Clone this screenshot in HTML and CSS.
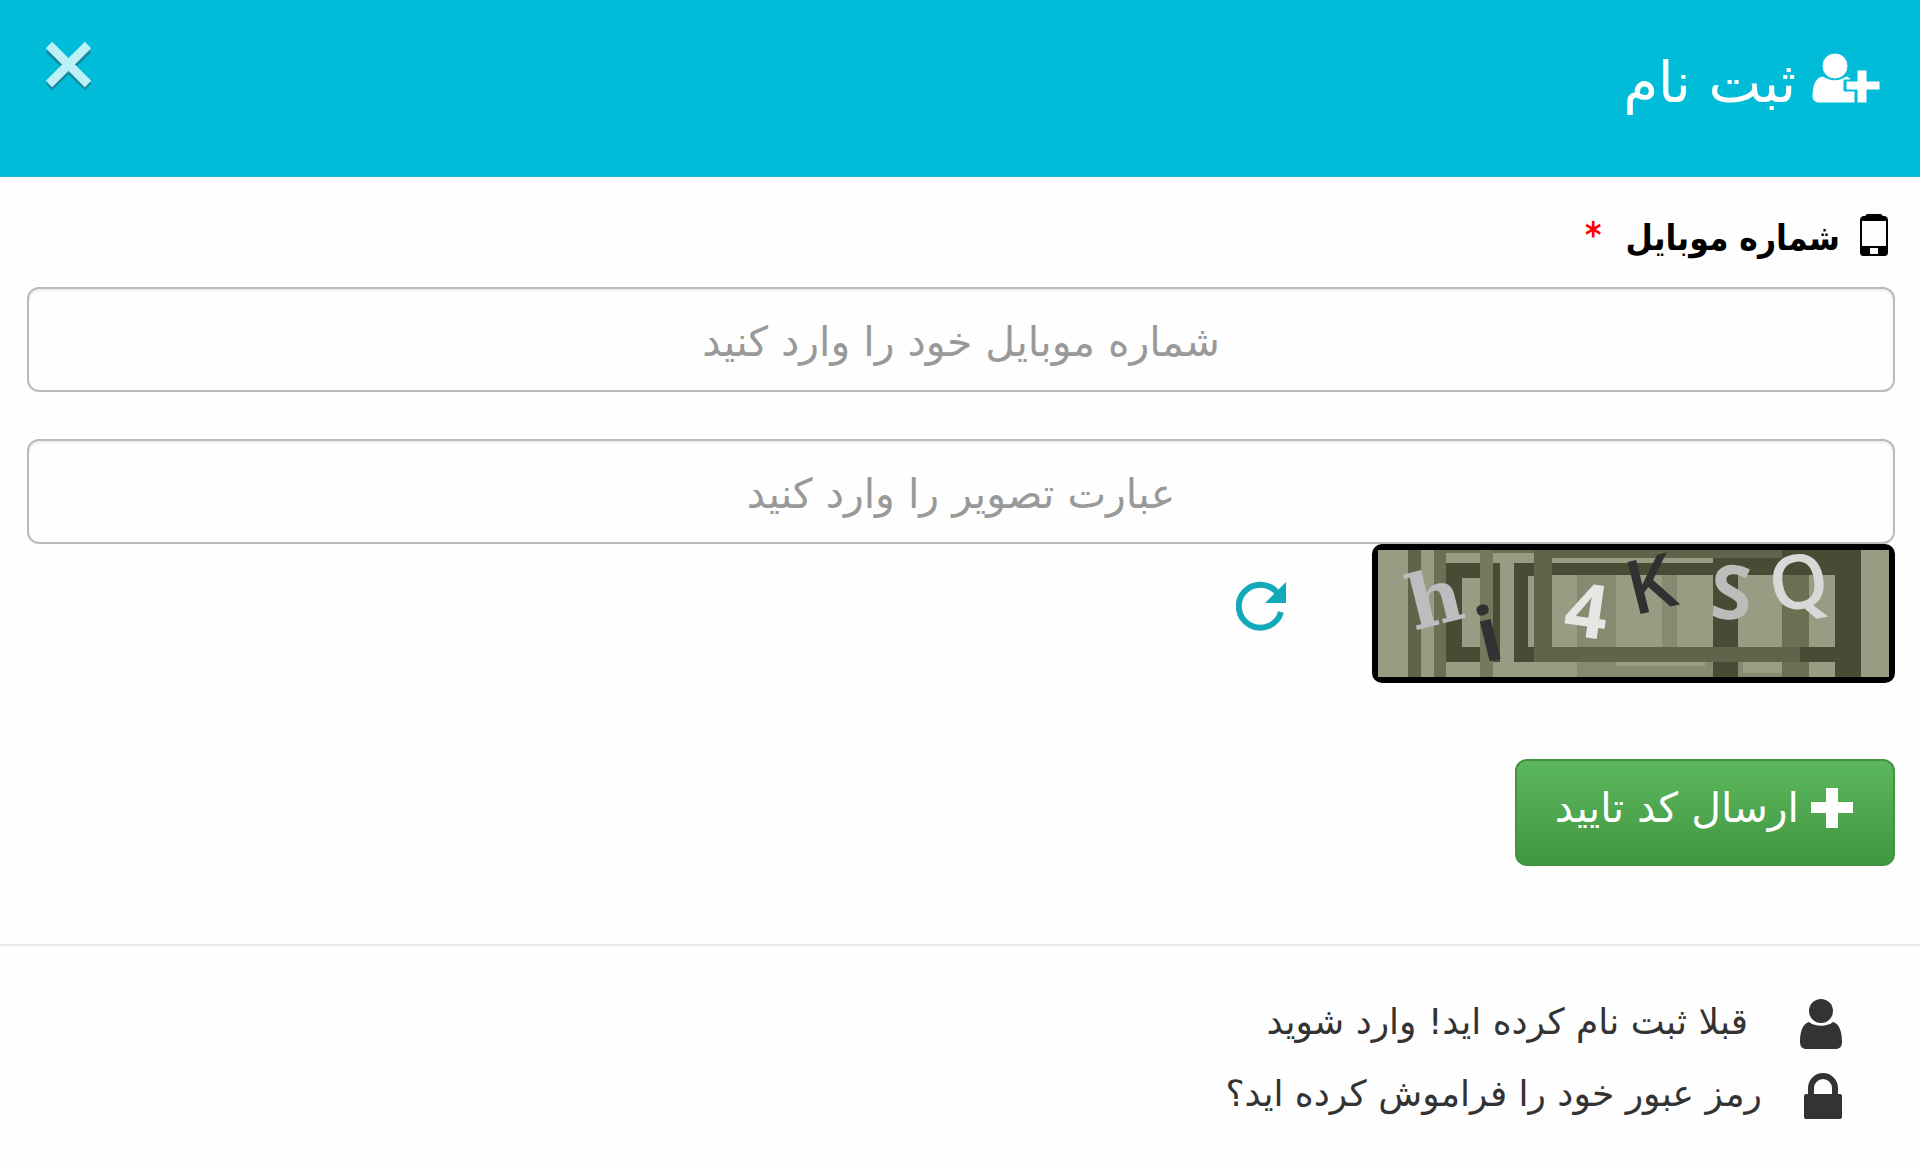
FILE: index.html
```html
<!DOCTYPE html>
<html lang="fa" dir="rtl">
<head>
<meta charset="utf-8">
<meta name="viewport" content="width=device-width, initial-scale=1">
<title>ثبت نام</title>
<link rel="stylesheet" href="styles.css">
</head>
<body>
<header class="modal-header">
  <h1 class="title">
    <svg class="title-icon" viewBox="0 0 68 50" aria-hidden="true">
      <ellipse cx="23" cy="13" rx="13" ry="13"/>
      <path d="M11 23C3 24 0 33 0 43c0 4 3 7 7 7h36V38H32V27h7c-1-2-3-4-5-4-6 5-16 5-23 0z"/>
      <path d="M45 17h10v11h13v9H55v13H45V37H34v-9h11z"/>
    </svg>
    <span>ثبت نام</span>
  </h1>
  <button class="close" type="button" aria-label="بستن">
    <svg class="close-icon" viewBox="0 0 48 50" aria-hidden="true">
      <path class="close-shadow" d="M4 8l39 38M43 8L4 46"/>
      <path class="close-cross" d="M4 4l39 39M43 4L4 43"/>
    </svg>
  </button>
</header>
<main>
  <form class="signup">
    <label class="field-label" for="mobile">
      <svg class="phone-icon" viewBox="0 0 28 42" aria-hidden="true">
        <path fill-rule="evenodd" d="M7 0h14l2 2h2q3 1 3 4v32q0 4-3 4H3q-3 0-3-4V6q0-3 3-4h2zM2 7v25h24V7zM10 34v6h8v-6z"/>
      </svg>
      <span class="label-text">شماره موبایل</span>
      <span class="required">*</span>
    </label>
    <input class="text-input" id="mobile" type="tel" dir="rtl" placeholder="شماره موبایل خود را وارد کنید">
    <input class="text-input" id="captcha" type="text" aria-label="عبارت تصویر" placeholder="عبارت تصویر را وارد کنید">
    <div class="captcha-row">
      <svg class="captcha" viewBox="0 0 511 127" direction="ltr" role="img" aria-label="تصویر امنیتی">
        <rect width="511" height="127" fill="#979c82"/>
        <g fill="#858b70">
          <path d="M199 25h39v72h-39zM284 25h15v72h-15zM199 112h216v15H199z"/>
        </g>
        <path fill="#999e83" d="M238 112h89v4h-89zM365 112h46v11h-46z"/>
        <g fill="#6b7053">
          <path d="M56 0h12v127H56zM404 25h27v102h-27zM56 0h101v3H56z"/>
        </g>
        <g fill="#484c34">
          <path fill-rule="evenodd" d="M68 13h54v99H68zM84 28v69h31V28z"/>
          <path d="M136 13h21v13h-7v71h7v15h-21zM174 13h161v12H174zM335 8h122v17H335zM335 25h25v102h-25zM422 97h35v15h-35zM404 0h79v127h-26V25h-53z"/>
        </g>
        <g fill="#5f654a">
          <path d="M30 0h13v127H30zM156 0h18v112h-18zM156 0h248v8H156zM174 97h248v15H174z"/>
        </g>
        <path fill="#747a5e" d="M102 0h13v127h-13z"/>
        <path fill="#979c82" d="M174 9h161v3H174z"/>
        <g text-anchor="middle">
          <text class="glyph-serif" transform="translate(63 74) rotate(-14)" fill="#bcbdbe">h</text>
          <text class="glyph-sans" transform="translate(117 110) rotate(-14)" fill="#303231">i</text>
          <text class="glyph-sans" transform="translate(205 87) rotate(8)" fill="#e6e7e4">4</text>
          <text class="glyph-round" transform="translate(279 60) rotate(-14)" fill="#303231">K</text>
          <text class="glyph-sans" transform="translate(352 69) rotate(3)" fill="#bcbdba">S</text>
          <text class="glyph-round" transform="translate(425 58) rotate(-10)" fill="#d8d9d7">Q</text>
        </g>
      </svg>
      <button class="refresh" type="button" aria-label="تصویر جدید">
        <svg class="refresh-icon" viewBox="0 0 50 50" aria-hidden="true">
          <path d="M45 31A21.500 21.500 0 1 1 42 13" fill="none" stroke="#12a9b8" stroke-width="6"/>
          <path d="M50 1v21H29z" fill="#12a9b8"/>
        </svg>
      </button>
    </div>
    <button class="submit" type="submit">
      <svg class="plus-icon" viewBox="0 0 42 40" aria-hidden="true"><path d="M15 0h12v14h15v11H27v15H15V25H0V14h15z"/></svg>
      <span>ارسال کد تایید</span>
    </button>
  </form>
</main>
<footer class="links">
  <a class="link link-login" href="#login">
    <svg class="user-icon" viewBox="0 0 42 50" aria-hidden="true"><ellipse cx="21" cy="12" rx="12" ry="12"/><path d="M9 23c6 5 18 5 24 0 7 2 9 11 9 20 0 5-3 7-6 7H6c-3 0-6-2-6-7 0-9 2-18 9-20z"/></svg>
    <span class="link-text">قبلا ثبت نام کرده اید! وارد شوید</span>
  </a>
  <a class="link link-forgot" href="#forgot">
    <svg class="lock-icon" viewBox="0 0 38 46" aria-hidden="true"><path fill-rule="evenodd" d="M4 21v-6a15 15 0 0 1 30 0v6h2q2 0 2 2v21q0 2-2 2H2q-2 0-2-2V23q0-2 2-2zm6 0h18v-6a9 9 0 0 0-18 0z"/></svg>
    <span class="link-text">رمز عبور خود را فراموش کرده اید؟</span>
  </a>
</footer>
</body>
</html>
```
FILE: styles.css
```css
* { box-sizing: border-box; }

body {
  margin: 0;
  background: #fefefe;
  color: #333;
  font-family: "DejaVu Sans", sans-serif;
}

button { font-family: inherit; cursor: pointer; }
svg { display: block; flex: none; }

.modal-header {
  display: flex;
  justify-content: space-between;
  align-items: flex-start;
  height: 177px;
  padding: 41px 40px 0 45px;
  background: #00bcd8;
  border-bottom: 1px solid #22b0c6;
}

.title {
  display: flex;
  gap: 16px;
  margin: 12px 0 0;
  color: #fff;
  font-size: 56px;
  font-weight: 400;
  line-height: 60px;
}

.title-icon { width: 68px; height: 50px; fill: #fff; stroke: #00bcd8; stroke-width: 1px; }

.close { padding: 0; border: 0; background: none; }
.close-icon { width: 48px; height: 50px; fill: none; stroke-width: 9px; }
.close-shadow { stroke: #168a9b; }
.close-cross { stroke: #bdf0f6; }

.signup { padding: 32px 25px 78px 27px; }

.field-label {
  display: flex;
  align-items: center;
  gap: 20px;
  height: 52px;
  margin-bottom: 26px;
  padding-right: 7px;
  color: #000;
  font-family: "DejaVu Sans Condensed", "DejaVu Sans", sans-serif;
  font-size: 35px;
  font-weight: 700;
}

.phone-icon { width: 28px; height: 42px; }
.label-text { padding-top: 6px; }
.required { color: #f00; margin-right: 4px; }

.text-input {
  display: block;
  width: 100%;
  height: 105px;
  padding: 4px 24px 0;
  border: 2px solid #bababa;
  border-radius: 12px;
  background: #fefefe;
  box-shadow: inset 0 2px 2px #eee;
  color: #555;
  font-family: inherit;
  font-size: 41px;
  text-align: center;
}

.text-input::placeholder { color: #999; opacity: 1; }
.text-input + .text-input { margin-top: 47px; }

.captcha-row { display: flex; align-items: flex-start; gap: 86px; }

.captcha {
  width: 523px;
  height: 139px;
  overflow: visible;
  border: 6px solid #000;
  border-radius: 10px;
  background: #000;
}

.glyph-sans { font-family: "Open Sans", sans-serif; font-size: 75px; font-weight: 700; }
.glyph-round { font-family: "Open Sans", sans-serif; font-size: 75px; font-weight: 600; }
.glyph-serif { font-family: "DejaVu Serif", serif; font-size: 75px; font-weight: 700; }

.refresh { margin-top: 37px; padding: 0; border: 0; background: none; }
.refresh-icon { width: 50px; height: 50px; }

.submit {
  display: flex;
  align-items: center;
  gap: 12px;
  height: 107px;
  margin-top: 76px;
  padding: 0 40px 10px 38px;
  border: 2px solid #439343;
  border-radius: 12px;
  background: linear-gradient(#5cb85c, #419641);
  color: #fff;
  font-size: 41px;
}

.plus-icon { width: 42px; height: 40px; fill: #fff; }

.links {
  display: flex;
  flex-direction: column;
  align-items: flex-start;
  gap: 12px;
  padding: 48px 78px 36px;
  border-top: 2px solid #e8e8e8;
}

.link {
  display: flex;
  align-items: center;
  height: 60px;
  color: #333;
  font-size: 36px;
  text-decoration: none;
}

.link-text { padding-bottom: 5px; }
.link-login { gap: 52px; }
.link-forgot { gap: 42px; }
.user-icon { width: 42px; height: 50px; fill: #333; }
.lock-icon { width: 38px; height: 46px; fill: #333; }
```
